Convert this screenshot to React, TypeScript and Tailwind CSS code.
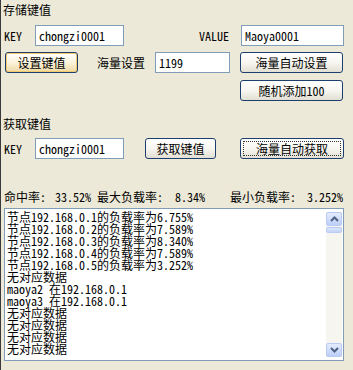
import React from 'react'

const font = "font-['Noto_Sans_Mono_CJK_SC','Liberation_Mono','Noto_Sans_CJK_SC',monospace]"

const btn =
  'h-[21px] shrink-0 rounded-[3px] border border-[#1C3F6E] bg-gradient-to-b from-white via-[#F7F6F1] to-[#E2DFD3] text-[12px] leading-none text-black flex items-center justify-center'

function Field({ value, w }: { value: string; w: string }) {
  return (
    <div className={`${w} h-[21px] shrink-0 bg-white border border-[#7F9DB9] pl-[3px] flex items-center text-[12px] leading-none`}>
      {value}
    </div>
  )
}

function Chevron({ up }: { up?: boolean }) {
  return (
    <svg width="9" height="6" viewBox="0 0 9 6">
      <path
        d={up ? 'M1 5 L4.5 1.5 L8 5' : 'M1 1 L4.5 4.5 L8 1'}
        fill="none"
        stroke="#4D6185"
        strokeWidth="2"
      />
    </svg>
  )
}

const log = [
  '节点192.168.0.1的负载率为6.755%',
  '节点192.168.0.2的负载率为7.589%',
  '节点192.168.0.3的负载率为8.340%',
  '节点192.168.0.4的负载率为7.589%',
  '节点192.168.0.5的负载率为3.252%',
  '无对应数据',
  'maoya2 在192.168.0.1',
  'maoya3 在192.168.0.1',
  '无对应数据',
  '无对应数据',
  '无对应数据',
  '无对应数据',
]

export default function App() {
  return (
    <div className={`${font} w-[353px] h-[370px] overflow-hidden bg-[#ECE9D8] border-l border-[#3A3A3A] pl-[2px] text-[12px] leading-[14px] text-black`}>
      {/* 存储 */}
      <div className="pt-[3px] h-[17px]">存储键值</div>
      <div className="mt-[8px] flex items-center h-[21px]">
        <span className="w-[32px] pl-[1px]">KEY</span>
        <Field value="chongzi0001" w="w-[89px]" />
        <span className="ml-[75px] w-[42px]">VALUE</span>
        <Field value="Maoya0001" w="w-[103px]" />
      </div>
      <div className="mt-[6px] flex items-center h-[21px]">
        <button className={`${btn} ml-[2px] w-[73px] from-[#FFFDF4] via-[#FBF3DC] to-[#EED9A3] shadow-[inset_0_0_0_1px_#F3C96B]`}>
          设置键值
        </button>
        <span className="ml-[19px] w-[58px]">海量设置</span>
        <Field value="1199" w="w-[75px]" />
        <button className={`${btn} ml-[10px] w-[103px]`}>海量自动设置</button>
      </div>
      <div className="mt-[7px] flex h-[21px]">
        <button className={`${btn} ml-[237px] w-[103px]`}>随机添加100</button>
      </div>

      {/* 获取 */}
      <div className="mt-[16px] h-[14px]">获取键值</div>
      <div className="mt-[7px] flex items-center h-[21px]">
        <span className="w-[32px] pl-[1px]">KEY</span>
        <Field value="chongzi0001" w="w-[89px]" />
        <button className={`${btn} ml-[21px] w-[71px]`}>获取键值</button>
        <button className={`${btn} ml-[24px] w-[104px] p-[2px] border-[#0B2A5A]`}>
          <span className="w-full h-full border border-dotted border-[#333] flex items-center justify-center">
            海量自动获取
          </span>
        </button>
      </div>

      {/* 统计 */}
      <div className="mt-[31px] h-[14px] flex pl-[1px]">
        <span className="w-[51px]">命中率:</span>
        <span className="w-[42px]">33.52%</span>
        <span className="w-[78px]">最大负载率:</span>
        <span className="w-[55px]">8.34%</span>
        <span className="w-[77px]">最小负载率:</span>
        <span>3.252%</span>
      </div>

      {/* 日志 */}
      <div className="mt-[4px] ml-[1px] w-[340px] h-[153px] bg-white border border-[#7F9DB9] flex">
        <div className="flex-1 pl-[2px] pt-[2px] leading-[12px] whitespace-pre">
          {log.map((l, i) => (
            <div key={i}>{l}</div>
          ))}
        </div>
        <div className="w-[16px] mr-[1px] mt-[3px] mb-[3px] bg-[#F6F5F0] flex flex-col justify-between">
          <div>
            <div className="h-[14px] rounded-[2px] border border-[#B9CBF3] bg-gradient-to-b from-[#E4ECFE] to-[#BCCFF7] flex items-center justify-center">
              <Chevron up />
            </div>
            <div className="mt-[1px] h-[6px] rounded-[2px] border border-[#B9CBF3] bg-gradient-to-b from-[#DCE6FD] to-[#C3D4F8]" />
          </div>
          <div className="h-[14px] rounded-[2px] border border-[#B9CBF3] bg-gradient-to-b from-[#E4ECFE] to-[#BCCFF7] flex items-center justify-center">
            <Chevron />
          </div>
        </div>
      </div>
    </div>
  )
}
